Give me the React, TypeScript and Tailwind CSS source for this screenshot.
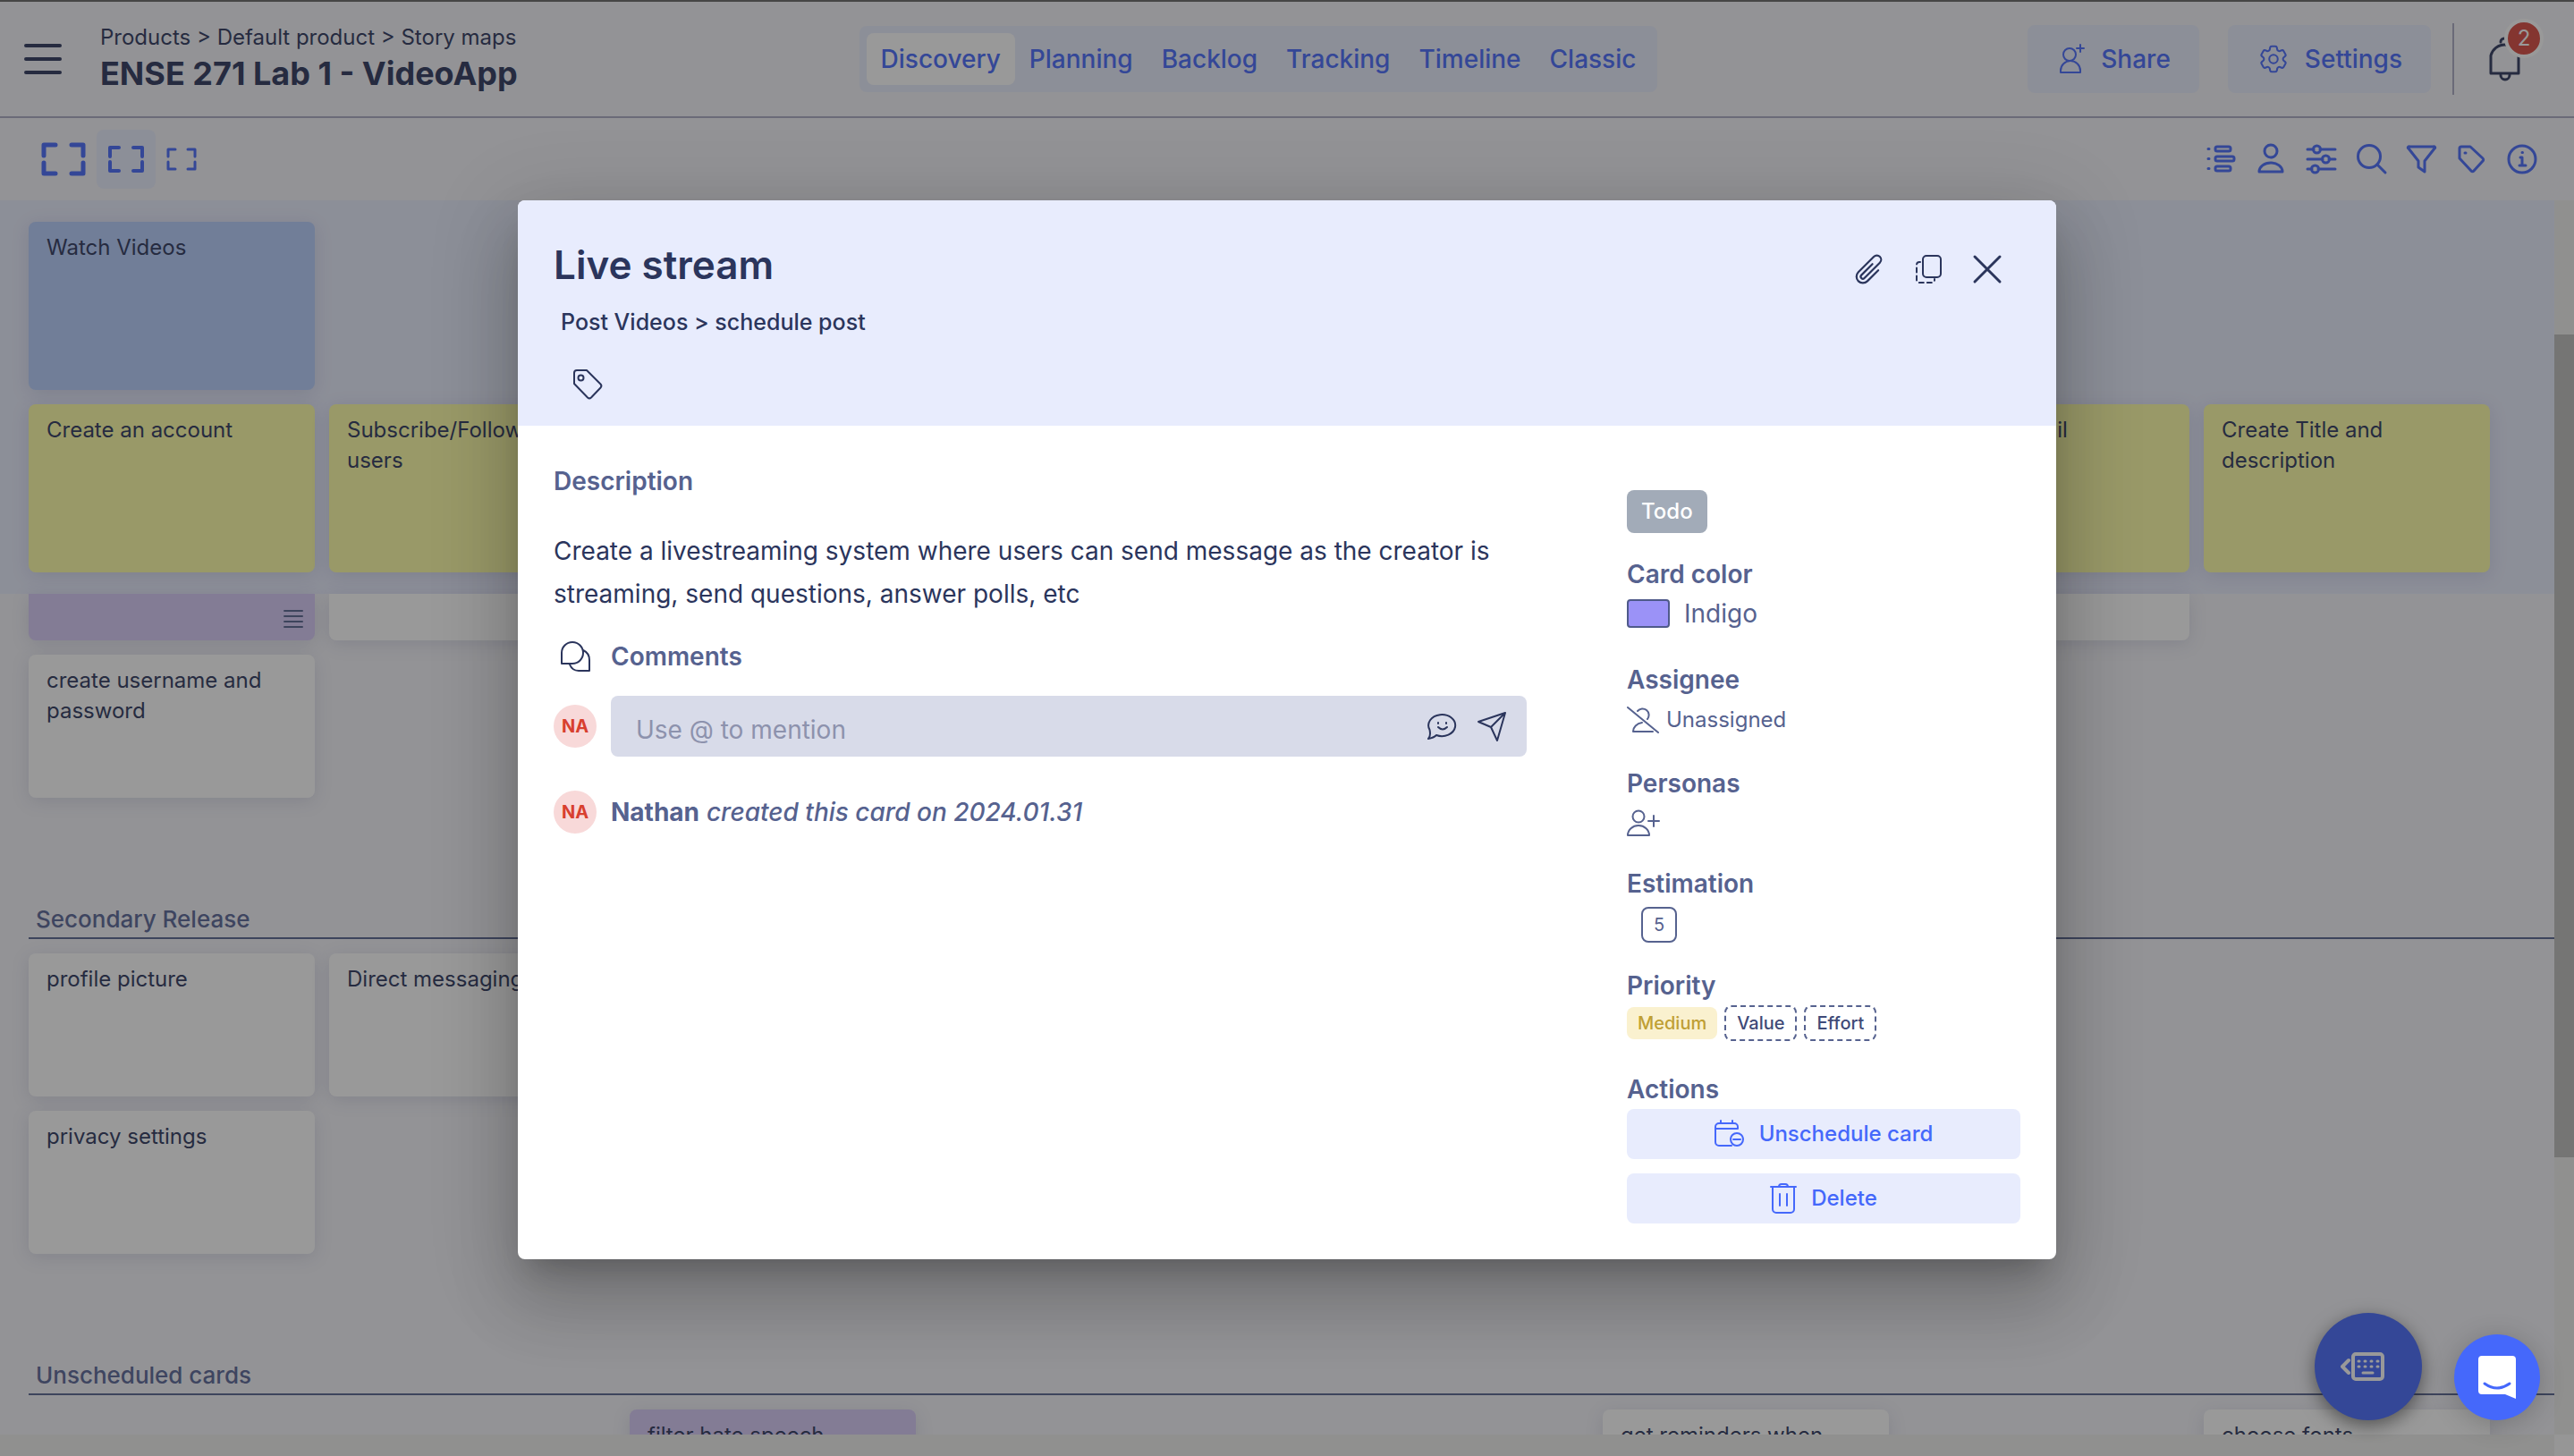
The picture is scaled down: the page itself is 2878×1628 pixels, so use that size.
import React from "react";
import { HiOutlineCog6Tooth, HiOutlinePaperClip } from "react-icons/hi2";

type IconProps = {
  width: number;
  height: number;
  stroke?: number;
  className?: string;
  children: React.ReactNode;
};

function Icon({ width, height, stroke = 2, className, children }: IconProps) {
  return (
    <svg
      aria-hidden="true"
      width={width}
      height={height}
      viewBox={`0 0 ${width} ${height}`}
      fill="none"
      stroke="currentColor"
      strokeWidth={stroke}
      strokeLinecap="round"
      strokeLinejoin="round"
      className={className}
    >
      {children}
    </svg>
  );
}

function FrameIcon({ size }: { size: "lg" | "md" | "sm" }) {
  if (size === "lg") {
    return (
      <Icon width={50} height={38} stroke={5}>
        <path d="M16 3H3v12M34 3h13v12M16 35H3V23M34 35h13V23" />
      </Icon>
    );
  }
  if (size === "md") {
    return (
      <Icon width={42} height={32} stroke={4}>
        <path d="M13 3H3v10M29 3h10v10M13 29H3V19M29 29h10V19" />
      </Icon>
    );
  }
  return (
    <Icon width={34} height={26} stroke={3}>
      <path d="M10 2H2v8M24 2h8v8M10 24H2v-8M24 24h8v-8" />
    </Icon>
  );
}

const tabs = ["Discovery", "Planning", "Backlog", "Tracking", "Timeline", "Classic"];

function Header() {
  return (
    <header className="flex h-[132px] shrink-0 items-center justify-between border-t-2 border-b-2 border-t-[#666666] border-b-[#a9a9c2] bg-[#f4f4f9] pr-[52px] pl-6">
      <div className="flex items-center gap-10">
        <button type="button" aria-label="Open menu" className="text-[#2b355c]">
          <Icon width={48} height={40} stroke={4}>
            <path d="M5 5h38M5 20h38M5 35h38" />
          </Icon>
        </button>
        <div>
          <nav aria-label="Breadcrumb" className="text-2xl leading-8">
            <a href="#products">Products</a> &gt; <a href="#default">Default product</a> &gt;{" "}
            <a href="#maps">Story maps</a>
          </nav>
          <h1 className="text-4xl leading-12 font-bold">ENSE 271 Lab 1 - VideoApp</h1>
        </div>
      </div>
      <nav aria-label="Views" className="flex rounded-lg bg-[#e8ecfd] p-2">
        {tabs.map((tab, i) => (
          <a
            key={tab}
            href={`#${tab.toLowerCase()}`}
            className={
              i === 0
                ? "rounded-lg bg-white px-4 text-[28px] leading-[58px] font-medium text-[#4568fb]"
                : "px-4 text-[28px] leading-[58px] font-medium text-[#4568fb]"
            }
          >
            {tab}
          </a>
        ))}
      </nav>
      <div className="flex items-center pl-8">
        <button
          type="button"
          className="flex h-[76px] items-center gap-4 rounded-lg bg-[#e8ecfd] px-8 text-[28px] font-medium text-[#4568fb]"
        >
          <Icon width={34} height={36} stroke={2}>
            <circle cx="15" cy="13" r="7" />
            <path d="M5 33v-2a10 10 0 0 1 22 0v2zM27 2v8M23 6h8" />
          </Icon>
          Share
        </button>
        <button
          type="button"
          className="ml-8 flex h-[76px] items-center gap-4 rounded-lg bg-[#e8ecfd] px-8 text-[28px] font-medium text-[#4568fb]"
        >
          <HiOutlineCog6Tooth size={38} strokeWidth={1.3} />
          Settings
        </button>
        <div className="ml-6 h-20 w-[2px] bg-[#a9a9c2]" />
        <button type="button" aria-label="2 notifications" className="relative ml-8 text-[#2b355c]">
          <Icon width={50} height={50} stroke={3}>
            <path d="M9 41V21a16 16 0 0 1 31 0v20zM20 6a4 4 0 0 1 8 0M20 43a5 5 0 0 0 10 0" />
          </Icon>
          <span className="absolute -top-5 left-6 flex h-11 w-11 items-center justify-center rounded-full border-4 border-white bg-[#d8463d] text-2xl text-white">
            2
          </span>
        </button>
      </div>
    </header>
  );
}

const tools: { label: string; art: React.ReactNode }[] = [
  {
    label: "List",
    art: (
      <>
        <rect x="11" y="4" width="17" height="5" rx="2" />
        <rect x="11" y="15" width="21" height="5" rx="2" />
        <rect x="11" y="26" width="17" height="5" rx="2" />
        <path d="M3 6.500h1M3 17.500h1M3 28.500h1" />
      </>
    ),
  },
  {
    label: "Users",
    art: (
      <>
        <circle cx="17" cy="9" r="7" />
        <path d="M4 32a13 10 0 0 1 26 0z" />
      </>
    ),
  },
  {
    label: "Adjust",
    art: (
      <>
        <path d="M2 7h7M16 7h17M2 18h17M26 18h7M2 29h5M14 29h19" />
        <circle cx="12.500" cy="7" r="4" />
        <circle cx="22.500" cy="18" r="4" />
        <circle cx="10.500" cy="29" r="4" />
      </>
    ),
  },
  {
    label: "Search",
    art: (
      <>
        <circle cx="15" cy="15" r="12.500" />
        <path d="m24 24 9 9" />
      </>
    ),
  },
  { label: "Filter", art: <path d="M4 4h27a1 1 0 0 1 1 2L21 20v12l-7-5v-7L3 6a1 1 0 0 1 1-2z" /> },
  {
    label: "Tags",
    art: (
      <>
        <path d="M4 6a2 2 0 0 1 2-2h10l14 13a2 2 0 0 1 0 3L20 31a2 2 0 0 1-3 0L4 17z" />
        <path d="M10 11h1" />
      </>
    ),
  },
  {
    label: "Info",
    art: (
      <>
        <circle cx="18" cy="18" r="15" />
        <path d="M16 16h2v8M15 25h7M18 10.500h.5" />
      </>
    ),
  },
];

function Toolbar() {
  return (
    <div className="flex h-[92px] shrink-0 items-center justify-between bg-[#f4f4f9] pr-10 pl-[46px] text-[#4568fb]">
      <div className="flex items-center gap-3">
        <button type="button" aria-label="Large cards">
          <FrameIcon size="lg" />
        </button>
        <button
          type="button"
          aria-label="Medium cards"
          aria-pressed="true"
          className="flex h-[66px] w-[66px] items-center justify-center rounded-lg bg-[#e8ecfd]"
        >
          <FrameIcon size="md" />
        </button>
        <button type="button" aria-label="Small cards">
          <FrameIcon size="sm" />
        </button>
      </div>
      <div className="flex items-center gap-5">
        {tools.map((t) => (
          <button key={t.label} type="button" aria-label={t.label}>
            <Icon width={36} height={36} stroke={3}>
              {t.art}
            </Icon>
          </button>
        ))}
      </div>
    </div>
  );
}

type CardData = { text: string; tone: "goal" | "step" | "white" | "purple" };

const tones = {
  goal: "h-[188px] rounded-lg bg-[#b5cdfd]",
  step: "h-[188px] rounded-lg bg-[#ffffa5]",
  white: "h-[160px] rounded-lg bg-white",
  purple: "h-[160px] rounded-lg bg-[#d7c9f8]",
};

function Card({ text, tone }: CardData) {
  return (
    <article
      className={`${tones[tone]} w-80 shrink-0 overflow-hidden px-5 py-3 text-2xl leading-[34px] shadow-[0_4px_20px_rgba(60,70,130,0.15)]`}
    >
      {text}
    </article>
  );
}

/* Lower edge of a card that has scrolled under the pinned steps. */
function CardTail({ tone }: { tone: "white" | "purple" }) {
  return (
    <article
      className={
        tone === "purple"
          ? "flex h-[52px] w-80 justify-end rounded-b-lg bg-[#d7c9f8] px-3 pt-4 text-[#56628f] shadow-[0_4px_20px_rgba(60,70,130,0.15)]"
          : "h-[52px] w-80 rounded-b-lg bg-white shadow-[0_4px_20px_rgba(60,70,130,0.15)]"
      }
    >
      {tone === "purple" && (
        <Icon width={24} height={24} stroke={2}>
          <path d="M2 3h20M2 9h20M2 15h20M2 21h20" />
        </Icon>
      )}
    </article>
  );
}

/* Two activities of four steps each; an empty column keeps its place. */
function Columns({ columns }: { columns: React.ReactNode[] }) {
  const groups = [columns.slice(0, 4), columns.slice(4, 8)];
  return (
    <div className="flex gap-24">
      {groups.map((group, g) => (
        <div key={g} className="flex gap-4">
          {group.map((column, c) => (
            <div key={c} className="flex w-80 shrink-0 flex-col gap-4">
              {column}
            </div>
          ))}
        </div>
      ))}
    </div>
  );
}

function ReleaseTitle({ children }: { children: React.ReactNode }) {
  return (
    <h2 className="flex h-[158px] items-end border-b-2 border-[#56628f] px-2 pb-0.5 text-[26px] leading-9 font-medium text-[#586496]">
      {children}
    </h2>
  );
}

function Board() {
  return (
    <main className="flex min-h-0 flex-1 flex-col">
      <div className="flex min-h-0 flex-1">
        <div className="min-w-0 flex-1 overflow-hidden bg-[#f4f4f9]">
          <div className="flex flex-col gap-4 bg-[#e8ecfd] py-6 pl-8">
            <Columns columns={[<Card text="Watch Videos" tone="goal" />, null, null, null, null, null, null, null]} />
            <Columns
              columns={[
                <Card text="Create an account" tone="step" />,
                <Card text="Subscribe/Follow other users" tone="step" />,
                null,
                null,
                null,
                null,
                <Card text="Add thumbnail" tone="step" />,
                <Card text="Create Title and description" tone="step" />,
              ]}
            />
          </div>
          <div className="pl-8">
            <Columns
              columns={[
                <>
                  <CardTail tone="purple" />
                  <Card text="create username and password" tone="white" />
                </>,
                <CardTail tone="white" />,
                null,
                null,
                null,
                null,
                <CardTail tone="white" />,
                null,
              ]}
            />
            <ReleaseTitle>Secondary Release</ReleaseTitle>
            <div className="pt-4">
              <Columns
                columns={[
                  <>
                    <Card text="profile picture" tone="white" />
                    <Card text="privacy settings" tone="white" />
                  </>,
                  <Card text="Direct messaging" tone="white" />,
                  null,
                  null,
                  null,
                  null,
                  null,
                  null,
                ]}
              />
            </div>
            <ReleaseTitle>Unscheduled cards</ReleaseTitle>
            <div className="pt-4">
              <Columns
                columns={[
                  null,
                  null,
                  <Card text="filter hate speech" tone="purple" />,
                  null,
                  null,
                  <Card text="get reminders when" tone="white" />,
                  null,
                  <Card text="choose fonts" tone="white" />,
                ]}
              />
            </div>
          </div>
        </div>
        <div className="w-[22px] shrink-0 bg-[#efefed] pt-[150px]">
          <div className="h-[920px] bg-[#bdbdbb]" />
        </div>
      </div>
      <div className="flex h-6 shrink-0 justify-end bg-[#efefed]">
        <div className="w-[22px] bg-[#fafafa]" />
      </div>
    </main>
  );
}

function Avatar() {
  return (
    <span className="flex h-12 w-12 shrink-0 items-center justify-center rounded-full bg-[#f8d9d9] text-xl font-bold text-[#d8402f]">
      NA
    </span>
  );
}

function Field({ title, children }: { title: string; children: React.ReactNode }) {
  return (
    <section>
      <h3 className="text-[28px] leading-9 font-semibold text-[#56628f]">{title}</h3>
      {children}
    </section>
  );
}

function CardDialog() {
  return (
    <section
      role="dialog"
      aria-modal="true"
      aria-labelledby="card-title"
      className="w-full max-w-[1720px] overflow-hidden rounded-lg bg-white text-[#2b355c] shadow-[0_22px_30px_-14px_rgba(0,0,0,0.2),0_48px_76px_6px_rgba(0,0,0,0.14),0_18px_92px_16px_rgba(0,0,0,0.12)]"
    >
      <header className="flex h-[252px] items-start justify-between bg-[#e8ecfd] px-10 pt-11">
        <div>
          <h2 id="card-title" className="text-[44px] leading-14 font-semibold">
            Live stream
          </h2>
          <p className="mt-5 px-2 text-[25px] leading-8 font-medium">Post Videos &gt; schedule post</p>
          <button type="button" aria-label="Add tag" className="mt-9 ml-5 block">
            <Icon width={36} height={36} stroke={2}>
              <path d="M3 5a3 3 0 0 1 3-3h11l15.500 15.500a3 3 0 0 1 0 4L22 32.500a3 3 0 0 1-4 0L3 17z" />
              <circle cx="10.500" cy="10.500" r="3" />
            </Icon>
          </button>
        </div>
        <div className="mt-[14px] flex gap-7 pr-[18px]">
          <button type="button" aria-label="Attach file">
            <HiOutlinePaperClip size={38} strokeWidth={1.4} />
          </button>
          <button type="button" aria-label="Copy card">
            <Icon width={38} height={38} stroke={2}>
              <rect x="13" y="4" width="20" height="24" rx="4" />
              <path
                d="M10 11H9a3 3 0 0 0-3 3v17a3 3 0 0 0 3 3h14a3 3 0 0 0 3-3v-1"
                strokeDasharray="5 4"
              />
            </Icon>
          </button>
          <button type="button" aria-label="Close">
            <Icon width={38} height={38} stroke={3}>
              <path d="m5 5 28 28M33 5 5 33" />
            </Icon>
          </button>
        </div>
      </header>
      <div className="flex gap-28 px-10 pb-10">
        <div className="min-w-0 flex-1 pt-11">
          <h3 className="text-[28px] leading-9 font-semibold text-[#56628f]">Description</h3>
          <p className="mt-9 text-[28px] leading-12">
            Create a livestreaming system where users can send message as the creator is streaming, send
            questions, answer polls, etc
          </p>
          <div className="mt-7 flex items-center gap-4">
            <span className="flex w-12 justify-center">
              <Icon width={36} height={36} stroke={2}>
                <path d="M3 26V14A12 12 0 1 1 15 26zM27 11a12 12 0 0 1 7 11v12H22a11 11 0 0 1-10-7" />
              </Icon>
            </span>
            <h3 className="text-[28px] leading-9 font-semibold text-[#56628f]">Comments</h3>
          </div>
          <form className="mt-[26px] flex items-center gap-4">
            <Avatar />
            <div className="flex h-[68px] flex-1 items-center gap-5 rounded-lg bg-[#d8dbe9] pr-5 pl-7">
              <input
                type="text"
                aria-label="Comment"
                placeholder="Use @ to mention"
                className="min-w-0 flex-1 bg-transparent pt-2 text-[28px] outline-none placeholder:text-[#8d92ad]"
              />
              <button type="button" aria-label="Insert emoji">
                <Icon width={36} height={34} stroke={2}>
                  <path d="M2 31q3-3 1.500-10a15 12 0 1 1 7.500 6q-3 3-9 4z" />
                  <path d="M13 18q5 5 10 0M13 13v1M22 13v1" />
                </Icon>
              </button>
              <button type="button" aria-label="Send comment">
                <Icon width={36} height={36} stroke={2}>
                  <path d="M32 3 2 13l14 6 7 15zM32 3 16 19" />
                </Icon>
              </button>
            </div>
          </form>
          <div className="mt-[38px] flex items-center gap-4">
            <Avatar />
            <p className="text-[28px] leading-12 text-[#56628f]">
              <strong className="font-bold">Nathan</strong>{" "}
              <em className="font-medium">created this card on 2024.01.31</em>
            </p>
          </div>
        </div>
        <aside className="w-[440px] shrink-0 pt-[72px] text-[#56628f]">
          <button type="button" className="block h-12 rounded-lg bg-[#a2abb8] px-4 text-2xl font-medium text-white">
            Todo
          </button>
          <div className="mt-7 flex flex-col gap-[30px]">
            <Field title="Card color">
              <div className="flex items-center gap-4 text-[28px] leading-[52px]">
                <span className="h-8 w-12 rounded-sm border-2 border-[#4f5a8a] bg-[#9b92f7]" />
                Indigo
              </div>
            </Field>
            <Field title="Assignee">
              <div className="flex items-center gap-2 pt-1 text-2xl leading-[46px]">
                <Icon width={36} height={32} stroke={2}>
                  <path d="M1 2l34 28M12 6a7 7 0 0 1 11 9M29 29H7a12 10 0 0 1 10-10" />
                </Icon>
                Unassigned
              </div>
            </Field>
            <Field title="Personas">
              <button type="button" aria-label="Add persona" className="mt-2 flex h-[38px] items-center">
                <Icon width={38} height={32} stroke={2}>
                  <circle cx="13" cy="8" r="6.500" />
                  <path d="M1 29a12 11 0 0 1 24 0zM24 13h12M30 7v12" />
                </Icon>
              </button>
            </Field>
            <Field title="Estimation">
              <button
                type="button"
                className="mt-2 ml-4 flex h-10 w-10 items-center justify-center rounded-lg border-2 border-[#56628f] text-xl"
              >
                5
              </button>
            </Field>
            <Field title="Priority">
              <div className="mt-1 mb-1.5 flex items-center gap-2 text-xl font-medium">
                <button type="button" className="h-9 rounded-lg bg-[#faf1cf] px-3 text-[#bf9f34]">
                  Medium
                </button>
                <button type="button" className="h-10 rounded-lg border-2 border-dashed border-[#56628f] px-3 text-[#3f4a78]">
                  Value
                </button>
                <button type="button" className="h-10 rounded-lg border-2 border-dashed border-[#56628f] px-3 text-[#3f4a78]">
                  Effort
                </button>
              </div>
            </Field>
            <Field title="Actions">
              <div className="mt-1 flex flex-col gap-4 text-2xl font-medium text-[#4568fb]">
                <button type="button" className="flex h-14 items-center justify-center gap-4 rounded-lg bg-[#e8ecfd]">
                  <Icon width={34} height={32} stroke={2}>
                    <path d="M19 29H5a4 4 0 0 1-4-4V8a4 4 0 0 1 4-4h17a4 4 0 0 1 4 4v2H1M7 1v3M20 1v3" />
                    <circle cx="25" cy="22" r="7" />
                    <path d="M21 22h8" />
                  </Icon>
                  Unschedule card
                </button>
                <button type="button" className="flex h-14 items-center justify-center gap-4 rounded-lg bg-[#e8ecfd]">
                  <Icon width={30} height={36} stroke={2}>
                    <path d="M1 5h28M3 5v25a4 4 0 0 0 4 4h16a4 4 0 0 0 4-4V5M10 5a3 3 0 0 1 3-3h4a3 3 0 0 1 3 3M11 13v13M19 13v13" />
                  </Icon>
                  Delete
                </button>
              </div>
            </Field>
          </div>
        </aside>
      </div>
    </section>
  );
}

export default function App() {
  return (
    <div className="relative flex h-screen flex-col overflow-hidden bg-[#f4f4f9] font-['Inter',sans-serif] text-[#2b355c]">
      <Header />
      <Toolbar />
      <Board />
      <button
        type="button"
        aria-label="Keyboard shortcuts"
        className="absolute right-[170px] bottom-10 flex h-[120px] w-[120px] items-center justify-center rounded-full bg-[#4568fb] pr-3 text-white shadow-[0_6px_20px_rgba(0,0,0,0.5)]"
      >
        <Icon width={50} height={34} stroke={3}>
          <path d="m9 10-7 7 7 7" strokeWidth="4" />
          <rect x="14" y="3" width="33" height="28" rx="3" strokeWidth="4" />
          <path d="M20 11h1M27 11h1M34 11h1M41 11h1M20 17h1M27 17h1M34 17h1M41 17h1M25 24h11" />
        </Icon>
      </button>
      <div className="absolute inset-0 flex items-start justify-center bg-[rgba(33,33,33,0.46)] pt-56">
        <CardDialog />
      </div>
      <button
        type="button"
        aria-label="Open chat"
        className="absolute right-[38px] bottom-10 flex h-24 w-24 items-center justify-center rounded-full bg-[#4568fb] shadow-[0_4px_30px_rgba(0,0,0,0.2)]"
      >
        <svg aria-hidden="true" width="42" height="48" viewBox="0 0 42 48">
          <path d="M4 0h34a4 4 0 0 1 4 4v44l-12-5H4a4 4 0 0 1-4-4V4a4 4 0 0 1 4-4z" fill="#fff" />
          <path d="M7 31q14 10 28 0" fill="none" stroke="#4568fb" strokeWidth="3" strokeLinecap="round" />
        </svg>
      </button>
    </div>
  );
}
